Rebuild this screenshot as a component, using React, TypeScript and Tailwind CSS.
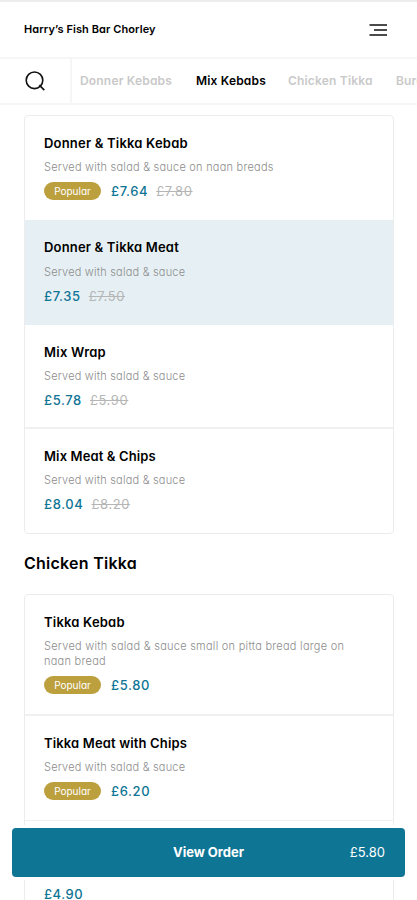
import React from 'react';

interface MenuItem {
  name: string;
  nameClass: string;
  description: string;
  descriptionClass: string;
  price: string;
  oldPrice?: string;
  popular?: boolean;
  className: string;
}

const mixKebabs: MenuItem[] = [
  {
    name: 'Donner & Tikka Kebab',
    nameClass: 'tracking-[0.2px]',
    description: 'Served with salad & sauce on naan breads',
    descriptionClass: 'mt-[7px] tracking-[0.23px]',
    price: '£7.64',
    oldPrice: '£7.80',
    popular: true,
    className: 'h-[104px]',
  },
  {
    name: 'Donner & Tikka Meat',
    nameClass: 'tracking-[0.18px]',
    description: 'Served with salad & sauce',
    descriptionClass: 'mt-2 tracking-[0.2px]',
    price: '£7.35',
    oldPrice: '£7.50',
    className: 'h-[105px] bg-[#e6f0f4]',
  },
  {
    name: 'Mix Wrap',
    nameClass: 'tracking-[0.25px]',
    description: 'Served with salad & sauce',
    descriptionClass: 'mt-[7px] tracking-[0.2px]',
    price: '£5.78',
    oldPrice: '£5.90',
    className: 'h-[104px] border-b-2',
  },
  {
    name: 'Mix Meat & Chips',
    nameClass: 'tracking-[0.12px]',
    description: 'Served with salad & sauce',
    descriptionClass: 'mt-[7px] tracking-[0.2px]',
    price: '£8.04',
    oldPrice: '£8.20',
    className: 'h-[104px]',
  },
];

const chickenTikka: MenuItem[] = [
  {
    name: 'Tikka Kebab',
    nameClass: 'tracking-[0.2px]',
    description: 'Served with salad & sauce small on pitta bread large on naan bread',
    descriptionClass: 'mt-[7px] leading-[15.5px] tracking-[0.26px]',
    price: '£5.80',
    popular: true,
    className: 'h-[121px] border-b-2',
  },
  {
    name: 'Tikka Meat with Chips',
    nameClass: 'tracking-[0.15px]',
    description: 'Served with salad & sauce',
    descriptionClass: 'mt-[7px] tracking-[0.2px]',
    price: '£6.20',
    popular: true,
    className: 'h-[105px] border-b',
  },
];

const MenuRow = ({ item }: { item: MenuItem }) => (
  <div className={`border-[#f0f0f0] px-[19px] pt-[17px] ${item.className}`}>
    <h3 className={`text-[13px] leading-5 font-semibold text-black ${item.nameClass}`}>{item.name}</h3>
    <p className={`w-[310px] text-[11px] leading-[15px] font-light text-[#8d8d8d] ${item.descriptionClass}`}>
      {item.description}
    </p>
    <div className="mt-[6px] flex h-5 items-center text-[13px] leading-5">
      {item.popular && (
        <span className="mr-2.5 flex h-[18px] w-[57px] items-center justify-center rounded-full bg-[#bda03e] text-[10px] text-white">
          Popular
        </span>
      )}
      <span className="font-medium tracking-[0.6px] text-[#0f7595]">{item.price}</span>
      {item.oldPrice && (
        <span className="ml-2 tracking-[0.6px] text-[#b5b5b5] line-through">{item.oldPrice}</span>
      )}
    </div>
  </div>
);

const App = () => {
  return (
    <div className="relative h-[900px] w-[417px] overflow-hidden bg-white font-['Inter',sans-serif] [font-feature-settings:'cv11']">
      {/* Header */}
      <header className="flex h-[59px] items-center justify-between border-t-2 border-b-2 border-t-[#ececec] border-b-[#f6f6f6] pr-[30px] pl-6">
        <h1 className="text-[11px] font-semibold tracking-[0.08px] text-black">Harry’s Fish Bar Chorley</h1>
        <svg width="18" height="14" viewBox="0 0 18 14" fill="none" stroke="#111" strokeWidth="1.5">
          <path d="M0.5 2H18M5 7H18M0.5 12H18" />
        </svg>
      </header>

      {/* Category tabs */}
      <nav className="flex h-[46px] items-center border-b-2 border-[#f6f6f6]">
        <div className="flex h-full w-[72px] shrink-0 items-center border-r-2 border-[#f6f6f6] pl-[25px]">
          <svg width="20" height="20" viewBox="0 0 20 20" fill="none" stroke="#111" strokeWidth="1.6">
            <circle cx="9.5" cy="9.3" r="8.3" />
            <path d="M14.3 14.1L19.3 19.1" />
          </svg>
        </div>
        <div className="flex pl-2 text-[12px] font-semibold tracking-[0.18px] whitespace-nowrap text-[#c9c9c9]">
          <span className="w-[116px]">Donner Kebabs</span>
          <span className="w-[92px] text-black">Mix Kebabs</span>
          <span className="w-[108px]">Chicken Tikka</span>
          <span>Burgers</span>
        </div>
      </nav>

      {/* Menu */}
      <main className="px-6 pt-[10px]">
        <section className="w-[370px] overflow-hidden rounded-[4px] border border-[#ececec]">
          {mixKebabs.map((item) => (
            <MenuRow key={item.name} item={item} />
          ))}
        </section>

        <h2 className="mt-[17px] text-[16px] leading-6 font-semibold tracking-[0.25px] text-black">Chicken Tikka</h2>

        <section className="mt-[19px] w-[370px] rounded-t-[4px] border border-[#ececec]">
          {chickenTikka.map((item) => (
            <MenuRow key={item.name} item={item} />
          ))}
          <div className="h-[100px] px-[19px] pt-[63px] text-[13px] leading-5 font-medium tracking-[0.5px] text-[#0f7595]">
            £4.90
          </div>
        </section>
      </main>

      {/* Order bar */}
      <button className="absolute top-[828px] left-3 flex h-[49px] w-[393px] items-center justify-center rounded-[4px] bg-[#0f7595] text-[13px] text-white ring-3 ring-white">
        <span className="font-bold">View Order</span>
        <span className="absolute right-5">£5.80</span>
      </button>
    </div>
  );
};

export default App;
